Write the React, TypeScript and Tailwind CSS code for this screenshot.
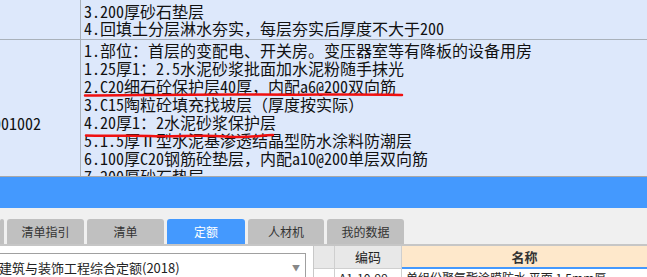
import type { ReactNode } from "react";

const SONG = "font-['Noto_Sans_Mono_CJK_SC','Noto_Sans_CJK_SC',monospace]";
const SANS = "font-['Noto_Sans_CJK_SC','Noto_Sans',sans-serif]";

const row1 = ["3.200厚砂石垫层", "4.回填土分层淋水夯实，每层夯实后厚度不大于200"];

const row2 = [
  "1.部位：首层的变配电、开关房。变压器室等有降板的设备用房",
  "1.25厚1：2.5水泥砂浆批面加水泥粉随手抹光",
  "2.C20细石砼保护层40厚，内配a6@200双向筋",
  "3.C15陶粒砼填充找坡层（厚度按实际）",
  "4.20厚1：2水泥砂浆保护层",
  "5.1.5厚Ⅱ型水泥基渗透结晶型防水涂料防潮层",
  "6.100厚C20钢筋砼垫层，内配a10@200单层双向筋",
  "7.200厚砂石垫层",
  "8.素土夯实",
];

const tabs = [
  { label: "", w: "w-[4px]" },
  { label: "清单指引", w: "w-[77px]" },
  { label: "清单", w: "w-[77px]" },
  { label: "定额", w: "w-[78px]", active: true },
  { label: "人材机", w: "w-[76px]" },
  { label: "我的数据", w: "w-[77px]" },
];

// 一行清单：左边编码，右边项目特征（每行固定行高）
function Row({ code, lines, lh, pad }: { code?: string; lines: string[]; lh: string; pad: string }): ReactNode {
  return (
    <div className="flex border-b border-[#a9b1ba]">
      <div className="flex w-[81px] shrink-0 items-center overflow-hidden border-r border-[#a9b1ba]">
        {code && <span className="ml-[-55px] whitespace-nowrap">{code}</span>}
      </div>
      <div className={`flex flex-col pl-[3px] ${pad}`}>
        {lines.map((l) => (
          <div key={l} className={`flex items-center whitespace-nowrap ${lh}`}>
            {l}
          </div>
        ))}
      </div>
    </div>
  );
}

export default function App() {
  return (
    <div className="h-[277px] w-[647px] overflow-hidden bg-white">
      {/* 清单特征 */}
      <div
        className={`relative h-[177px] overflow-hidden border-b border-[#a8a8a8] bg-[#dde8fb] text-[16px] leading-[18px] text-[#111] ${SONG}`}
      >
        <Row lines={row1} lh="h-[17px]" pad="pt-[2px] pb-[3px]" />
        <Row code="010904001002" lines={row2} lh="h-[18px]" pad="pt-[1px] pb-[3px]" />
        {/* 红色批注线 */}
        <svg className="absolute left-0 top-0" width="647" height="177">
          <path
            d="M85 95.5 C150 95 200 94 260 94.5 S340 94 402 95"
            stroke="#f01010"
            strokeWidth="2.5"
            fill="none"
            strokeLinecap="round"
          />
          <path
            d="M86 135.5 C110 136.5 125 135 150 136 S200 134.5 225 136.5 S260 135 273 135"
            stroke="#f01010"
            strokeWidth="2.5"
            fill="none"
            strokeLinecap="round"
          />
        </svg>
      </div>

      <div className="h-[31px] bg-[#4499fe]" />

      {/* 页签 */}
      <div className="flex h-[38px] items-end gap-[2px] border-b-2 border-[#c6c6c6] bg-[#f0f0f0] pt-[11px]">
        {tabs.map((t, i) => (
          <div
            key={i}
            className={`flex h-[25px] ${t.w} shrink-0 items-center justify-center rounded-t-[3px] text-[12px] ${SANS} ${
              t.active ? "bg-[#4499fe] text-white" : "bg-[#c0c0c0] text-[#333]"
            } ${i > 0 ? "ml-[1px]" : ""}`}
          >
            {t.label}
          </div>
        ))}
      </div>

      {/* 下方：定额库选择 + 定额列表 */}
      <div className={`flex ${SANS}`}>
        <div className="w-[313px] shrink-0 pt-[7px]">
          <div className="flex h-[30px] w-[306px] items-center justify-between border border-l-0 border-[#a0a0a0] pr-[5px]">
            <span className="-ml-[1px] whitespace-nowrap text-[13px] text-[#222]">
              建筑与装饰工程综合定额(2018)
            </span>
            <span className="text-[8px] text-[#888]">▼</span>
          </div>
        </div>
        <div className="flex-1 border-l border-[#c8c8c8] text-[13px]">
          <div className="flex h-[23px]">
            <div className="w-[21px] border-b border-r border-[#cfcfcf] bg-[#e8e8e8]" />
            <div className="flex w-[67px] items-center justify-center border-b border-r border-[#cfcfcf] bg-[#e8e8e8] text-[#222]">
              编码
            </div>
            <div className="flex flex-1 items-center justify-center border-b-2 border-[#4499fe] bg-[#fee8cb] font-bold text-[#333]">
              名称
            </div>
          </div>
          <div className="flex h-[20px] text-[12px] text-[#222]">
            <div className="w-[21px] border-r border-[#cfcfcf] pl-[8px]">.</div>
            <div className="w-[67px] border-r border-[#cfcfcf] pl-[4px]">A1-10-99</div>
            <div className="flex-1 whitespace-nowrap pl-[4px]">单组份聚氨酯涂膜防水 平面 1.5mm厚</div>
          </div>
        </div>
      </div>
    </div>
  );
}
